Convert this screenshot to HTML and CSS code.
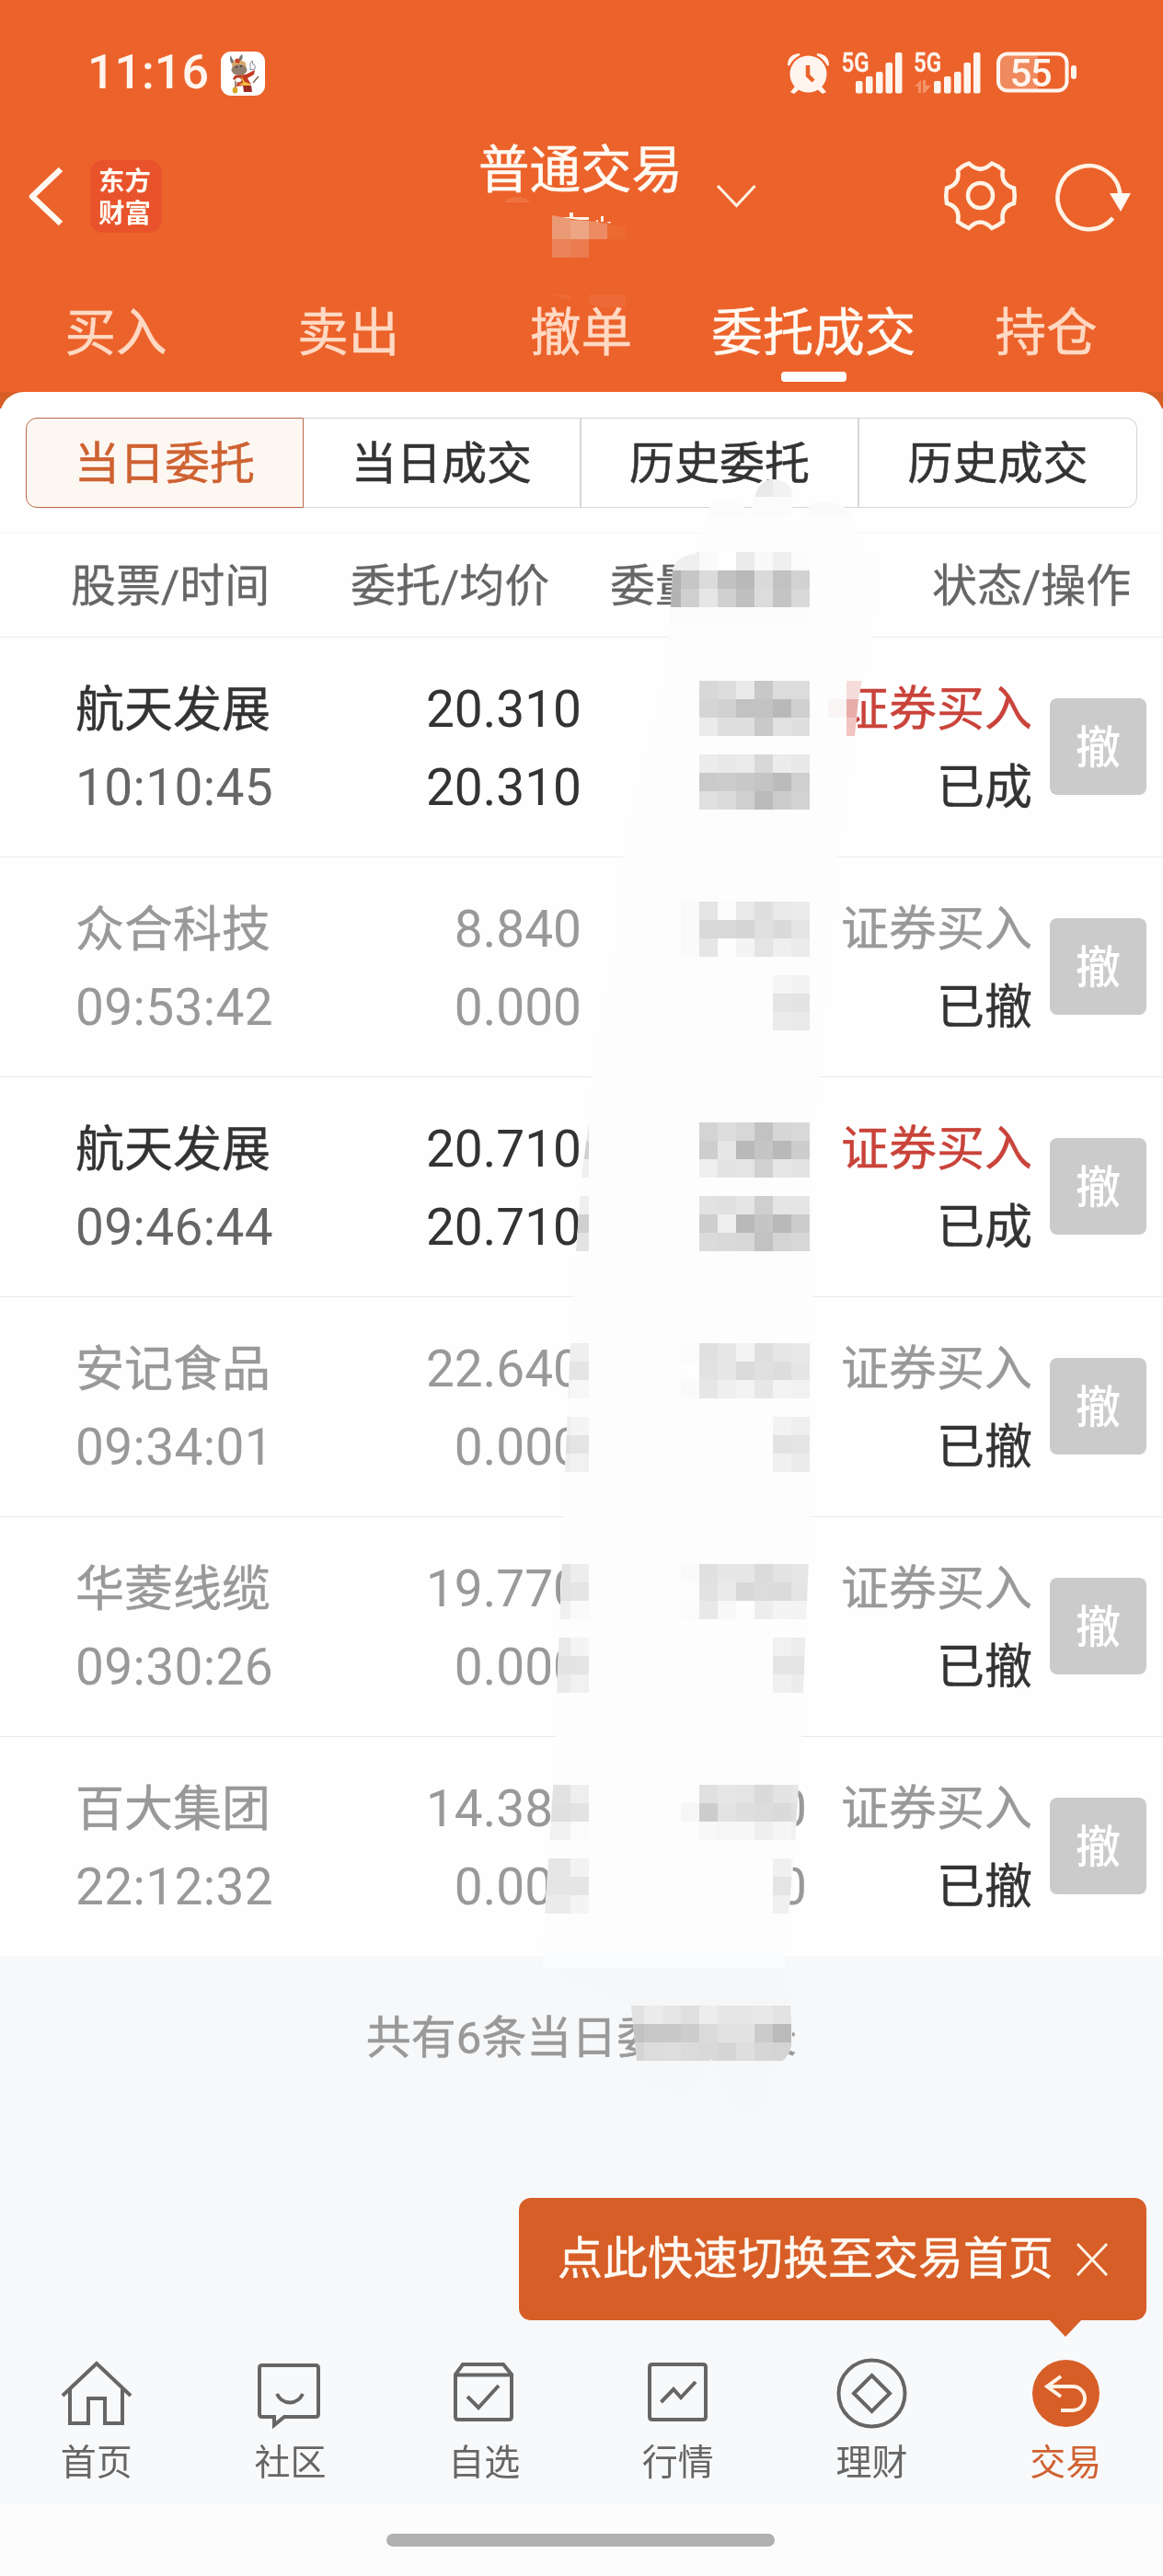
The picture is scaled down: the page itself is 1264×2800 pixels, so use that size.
FILE: index.html
```html
<!DOCTYPE html>
<html lang="zh-CN">
<head>
<meta charset="utf-8">
<title>普通交易</title>
<link rel="stylesheet" href="styles.css">
</head>
<body>
<div class="app">
  <header class="header">
    <div class="status">
      <div class="status-left">
        <span class="clock">11:16</span>
        <svg class="mascot" width="48" height="48" viewBox="0 0 48 48">
          <rect width="48" height="48" rx="11" fill="#fff"/>
          <path d="M13 15Q8 9 11 4Q12 10 18 13M21 11Q25 8 23 3Q20 5 19 10" fill="#777"/>
          <path d="M12 13Q18 6 27 12L28 20L13 22Z" fill="#dca86c"/>
          <path d="M15 9Q18 6 21 9L20 13L16 12Z" fill="#c8462a"/>
          <ellipse cx="20" cy="20" rx="8.500" ry="6" fill="#94806e"/>
          <circle cx="17" cy="17" r="1" fill="#333"/><circle cx="22" cy="16" r="1" fill="#333"/>
          <path d="M15 26L27 25L37 20L36 25L29 29L33 36L17 38L18 32L13 30Z" fill="#c33a22"/>
          <path d="M22 26L26 33L32 35L31 38L19 36L24 34Z" fill="#f0b93c"/>
          <path d="M24 37H33L34 44H25Z" fill="#9c2b20"/>
          <path d="M32 20L32 13L34 10L35 14Q38 14 37 19Z" fill="#fff" stroke="#889" stroke-width="1"/>
          <path d="M16 31V40M35 34L41 27" stroke="#865" stroke-width="1.5"/>
          <ellipse cx="19" cy="31" rx="3.500" ry="2.500" fill="#fff" stroke="#a98" stroke-width=".6"/>
          <ellipse cx="15.500" cy="42" rx="2.800" ry="3.500" fill="#d9a628"/>
        </svg>
      </div>
      <svg class="status-icons" width="316" height="63" viewBox="855 40 316 63">
        <g fill="#fff5ee">
          <ellipse cx="878.500" cy="80.500" rx="20" ry="20"/>
          <path d="M864 94L859 100L863 102L870 96ZM893 94L898 100L894 102L887 96Z"/>
          <path d="M857 71Q857 60 869 59Q861 63 857 71ZM900 71Q900 60 888 59Q896 63 900 71Z" stroke="#fff5ee" stroke-width="2"/>
          <g id="bars"><rect x="930" y="88" width="7.500" height="13.500" rx="2"/><rect x="941" y="83" width="7.500" height="18.500" rx="2"/><rect x="952" y="78" width="7.500" height="23.500" rx="2"/><rect x="962.500" y="68" width="7.500" height="33.500" rx="2"/><rect x="973" y="57" width="7.500" height="44.500" rx="2"/></g>
          <use href="#bars" x="85"/>
          <rect x="1164" y="71" width="6" height="15" rx="3"/>
        </g>
        <path d="M878 71V82L884 88" fill="none" stroke="#ec622b" stroke-width="4.500"/>
        <path d="M994 94L1001 87V101H998V94ZM1003 87H1006V93H1012L1005 101H1003Z" fill="#f4926a"/>
        <path d="M1095 58.500H1128V98.500H1095Q1085 98.500 1085 88V69Q1085 58.500 1095 58.500Z" fill="#ef8a5f"/>
        <rect x="1085" y="58.500" width="74.500" height="40" rx="10" fill="none" stroke="#fff5ee" stroke-width="4"/>
        <text class="net" x="914.500" y="78" textLength="30" lengthAdjust="spacingAndGlyphs">5G</text>
        <text class="net" x="993" y="78" textLength="30" lengthAdjust="spacingAndGlyphs">5G</text>
        <text class="battery" x="1097.500" y="94" textLength="46">55</text>
      </svg>
    </div>
    <div class="titlebar">
      <div class="brand">
        <svg width="40" height="70" viewBox="30 178 40 70"><path d="M66 184L35 213.500L66 243" class="line back"/></svg>
        <div class="logo">东方<br>财富</div>
      </div>
      <div class="title">普通交易</div>
      <svg class="caret" width="50" height="30" viewBox="775 198 50 30"><path d="M780 202L800.500 223.500L820.500 202" class="line thin"/></svg>
      <svg class="tools" width="210" height="84" viewBox="1022 171 210 84">
        <g class="line tool">
          <path d="M1053 177.500Q1065.500 190 1078 177.500Q1085 180 1090 185Q1087 200 1102 204.500Q1103.500 213 1102 221Q1087 225 1090 241Q1085 245 1078 248Q1065.500 235 1053 248Q1046 245 1041 241Q1044 225 1029 221Q1027.500 213 1029 204.500Q1044 200 1041 185Q1046 180 1053 177.500Z"/>
          <circle cx="1065.500" cy="212.500" r="13.500"/>
          <path d="M1209.500 237A34 34.500 0 1 1 1217.500 213"/>
        </g>
        <path d="M1206 210H1229L1218 230Z" fill="#fff9f2"/>
      </svg>
    </div>
    <nav class="tabs">
      <a>买入</a><a>卖出</a><a>撤单</a><a class="on">委托成交</a><a>持仓</a>
    </nav>
  </header>

  <main class="panel">
    <div class="segments">
      <span class="seg on">当日委托</span><span class="seg">当日成交</span><span class="seg">历史委托</span><span class="seg">历史成交</span>
    </div>
    <div class="row thead"><span>股票/时间</span><span>委托/均价</span><span>委量</span><span>状态/操作</span></div>
    <div class="row order done">
      <div class="name"><b>航天发展</b><i>10:10:45</i></div><div class="num"><b>20.310</b><i>20.310</i></div><div class="num"></div>
      <div class="state"><b>证券买入</b><i>已成</i></div><button>撤</button>
    </div>
    <div class="row order">
      <div class="name"><b>众合科技</b><i>09:53:42</i></div><div class="num"><b>8.840</b><i>0.000</i></div><div class="num"></div>
      <div class="state"><b>证券买入</b><i>已撤</i></div><button>撤</button>
    </div>
    <div class="row order done">
      <div class="name"><b>航天发展</b><i>09:46:44</i></div><div class="num"><b>20.710</b><i>20.710</i></div><div class="num"></div>
      <div class="state"><b>证券买入</b><i>已成</i></div><button>撤</button>
    </div>
    <div class="row order">
      <div class="name"><b>安记食品</b><i>09:34:01</i></div><div class="num"><b>22.640</b><i>0.000</i></div><div class="num"></div>
      <div class="state"><b>证券买入</b><i>已撤</i></div><button>撤</button>
    </div>
    <div class="row order">
      <div class="name"><b>华菱线缆</b><i>09:30:26</i></div><div class="num"><b>19.770</b><i>0.000</i></div><div class="num"><b>0</b><i>0</i></div>
      <div class="state"><b>证券买入</b><i>已撤</i></div><button>撤</button>
    </div>
    <div class="row order">
      <div class="name"><b>百大集团</b><i>22:12:32</i></div><div class="num"><b>14.380</b><i>0.000</i></div><div class="num"><b>0</b><i>0</i></div>
      <div class="state"><b>证券买入</b><i>已撤</i></div><button>撤</button>
    </div>
  </main>

  <section class="summary">
    <p>共有6条当日委托记录</p>
    <div class="tip"><span>点此快速切换至交易首页</span>
      <svg width="38" height="40" viewBox="0 0 38 40"><path d="M3 3L35 37M35 3L3 37" class="line thin"/></svg>
    </div>
  </section>

  <nav class="bottom">
    <a><svg width="80" height="80" viewBox="65 2561 80 80"><path class="line" d="M68 2604L105 2569L142 2604M76 2597V2634H96V2607H114V2634H133V2597"/></svg>首页</a>
    <a><svg width="80" height="80" viewBox="275 2561 80 80"><path class="line" d="M285 2571H343Q346 2571 346 2574V2624Q346 2627 343 2627H309L298 2636V2627H285Q282 2627 282 2624V2574Q282 2571 285 2571ZM301 2602Q305 2611 315 2611.500Q325 2611 329 2602"/></svg>社区</a>
    <a><svg width="80" height="80" viewBox="486 2561 80 80"><path class="line" d="M503 2570H547L556 2581V2627Q556 2630 553 2630H498Q495 2630 495 2627V2581ZM495 2581.500H556M508 2605L520 2617L542 2593"/></svg>自选</a>
    <a><svg width="80" height="80" viewBox="697 2561 80 80"><path class="line" d="M709 2570H764Q767 2570 767 2573V2627Q767 2630 764 2630H709Q706 2630 706 2627V2573Q706 2570 709 2570ZM718.500 2611L732 2597L740 2606L756 2589"/></svg>行情</a>
    <a><svg width="80" height="80" viewBox="907 2561 80 80"><g class="line"><circle cx="947.500" cy="2601.500" r="36"/><path d="M947.500 2582L967 2601.500L947.500 2621L928 2601.500Z"/></g></svg>理财</a>
    <a class="on"><svg width="80" height="80" viewBox="1118 2561 80 80"><circle cx="1158.500" cy="2601.500" r="36.500" fill="#d75e27"/><path class="line" d="M1153 2583L1138 2594L1153 2605M1138 2594H1166A13 13 0 0 1 1166 2620H1153"/></svg>交易</a>
  </nav>
  <div class="gesture"><span></span></div>

  <svg class="redaction" width="1264" height="2800" viewBox="0 0 1264 2800">
    <defs>
      <clipPath id="brush"><path d="M731 620Q735 603 757 602L763 580L770 555Q774 543 791 543Q808 544 812 560L818 550Q822 521 840 521Q861 522 862 540L858 570L874 560Q880 545 896 545Q920 549 929 562L931 596Q952 602 955 615L946 692L933 760L929 800L910 931L890 1170L883 1240L883 1410L881 1650L876 1762L871 1890L864 2003L857 2083L853 2126V2140L859 2180L861 2210Q862 2240 840 2245Q838 2290 815 2297Q785 2290 773 2237Q760 2275 738 2276Q697 2270 692 2240L686 2180L590 2140V2110L596 2023L601 1943L604 1890L605 1842L611 1700L614 1600L620 1460L626 1360L632 1280L640 1220L643 1170L668 1040L677 931L703 820L725 730Z"/></clipPath>
    </defs>
    <g clip-path="url(#brush)">
      <rect x="580" y="510" width="400" height="1610" fill="#fdfdfd"/>
      <rect x="580" y="2120" width="400" height="20" fill="#fafbfd"/>
      <rect x="580" y="2140" width="400" height="160" fill="#f6f7f9"/>
      <g id="cells"></g>
    </g>
    <g fill="#fff3e6"><path d="M608 236H619V231H623V236H640V239H630Z"/><path d="M653 235H656V241H653ZM647 240L650 239V242ZM659 241H664L663 243Z"/></g>
    <path d="M547 220Q562 208 577 220Z" fill="#ee7341"/>
    <path d="M600 234L620 238V260H600Z" fill="#eb9a76"/><path d="M620 239L640 240V260H620Z" fill="#eda584"/><path d="M640 240L660 243V260H640Z" fill="#ec8b63"/><path d="M660 244L680 246V260H660Z" fill="#ed6932"/>
    <path d="M600 260H620V280H600Z" fill="#ec8258"/><path d="M620 260H640V280H620Z" fill="#eb7c50"/>
    <g fill="#ed6a36"><path d="M598 320H620V326Z"/><path class="under" d="M640 320H680V334L654 334L640 331Z"/></g>
  </svg>
</div>
<script src="mosaic.js"></script>
</body>
</html>
```
FILE: styles.css
```css
* { box-sizing: border-box; }
body { margin: 0; background: #f7f8fa; }
.app { position: relative; width: 1264px; height: 2800px; overflow: hidden; display: flex; flex-direction: column; font-family: Roboto, "Noto Sans CJK SC", sans-serif; color: #333; white-space: nowrap; }
svg { display: block; flex: none; }
.line { fill: none; stroke: #666; stroke-width: 4; }
.line.back { stroke: #fff9f2; stroke-width: 6.5; stroke-linejoin: round; }
.line.thin { stroke: #fff3e6; stroke-width: 3; }
.line.tool { stroke: #fff3e6; stroke-width: 4.5; }
b, i { font-weight: 400; font-style: normal; }

.header { height: 444px; margin-bottom: -18px; background: linear-gradient(#ec622b 426px, #d75e27 426px); color: #fff9f2; }
.status { height: 134px; padding: 40px 93px 0 95px; display: flex; justify-content: space-between; }
.status-left { display: flex; gap: 13px; padding-top: 16px; }
.clock { width: 132px; font-size: 52px; font-weight: 500; line-height: 46px; color: #fff5ee; }
.net { font: 500 29px Roboto, sans-serif; fill: #fff5ee; stroke: #fff5ee; stroke-width: 0.5px; }
.battery { font: 500 42px Roboto, sans-serif; fill: #fff5ee; }
.titlebar { height: 166px; padding: 0 32px 0 30px; display: grid; grid-template-columns: 490px 222px 33px 50px 1fr; align-items: start; }
.brand { display: flex; gap: 28px; padding-top: 40px; }
.brand svg { margin-top: 4px; }
.logo { width: 78px; height: 79px; border-radius: 14px; background: #e9532c; padding: 3px 3px 0 0; text-align: center; font: 700 28.5px/35px "Noto Sans CJK SC", sans-serif; }
.title { font-size: 55.5px; line-height: 80px; padding-top: 12px; -webkit-text-stroke: 0.6px; }
.caret { grid-column: 4; margin-top: 64px; }
.tools { grid-column: 5; justify-self: end; margin-top: 37px; }
.tabs { height: 126px; display: grid; grid-template-columns: repeat(5, 1fr); font-size: 55.5px; line-height: 120px; padding-top: 3px; text-align: center; color: #ffd9c3; -webkit-text-stroke: 0.5px; }
.tabs a { margin-left: -1px; }
.tabs .on { color: #fff9f2; }
.tabs .on::after { content: ""; display: block; width: 71px; height: 11px; margin: -19px auto 0; border-radius: 4px; background: #fff; }

.panel { height: 1700px; background: #fefefe; border-radius: 26px 26px 0 0; padding-top: 28px; }
.segments { height: 98px; margin: 0 28px 27px; display: grid; grid-template-columns: 302px 302px 302px 1fr; grid-template-rows: 98px; font-size: 49px; line-height: 96px; text-align: center; -webkit-text-stroke: 0.5px; }
.seg { padding-top: 2px; border: 1px solid #d6d6d6; border-left-width: 0; border-right-width: 2px; }
.seg.on { border: 1px solid #b9694a; border-radius: 12px 0 0 12px; background: #fdf7f2; color: #ce6231; }
.seg:last-child { border-radius: 0 12px 12px 0; border-right-width: 1px; }
.thead { height: 114px; border-top: 1px solid #f6f6f6; display: grid; grid-template-columns: 304px 282px 350px 1fr; padding: 2px 0 0 77px; font-size: 49px; line-height: 112px; color: #666; -webkit-text-stroke: 0.3px; }
.row { border-bottom: 1px solid #ebebeb; }
.order { height: 239px; display: grid; grid-template-columns: 300px 250px 245px 244px 105px; padding: 34px 0 0 82px; color: #999; }
.order:last-child { border-bottom: 0; }
.order b, .order i { display: block; height: 85px; line-height: 90px; font-size: 53px; }
.order .name i, .order .num b, .order .num i { font-size: 55px; line-height: 88px; }
.order .name i { letter-spacing: 0.35px; }
.name b, .state { -webkit-text-stroke: 0.4px; }
.num { text-align: right; }
.state { text-align: right; margin-right: -1px; }
.order .state b, .order .state i { font-size: 52px; }
.order .state i { color: #333; }
.done { color: #333; }
.done .name i { color: #666; }
.done .state b { color: #c9433a; }
.order button { width: 105px; height: 105px; margin: 32px 0 0 20px; padding: 0 0 5px; border: 0; border-radius: 8px; background: #cbcbcb; color: #fff; font: 500 49px/100px "Noto Sans CJK SC", sans-serif; }

.summary { height: 414px; display: flex; flex-direction: column; }
.summary p { margin: 55px 0 0; height: 67px; line-height: 70px; text-align: center; font-size: 49px; color: #999; -webkit-text-stroke: 0.5px; }
.tip { position: relative; align-self: flex-end; width: 682px; height: 133px; margin: 141px 18px 0 0; padding: 0 40px 0 42px; display: flex; align-items: center; justify-content: space-between; border-radius: 13px; background: #d75e27; color: #fff9f2; font-size: 49px; }
.tip span { margin-bottom: 10px; -webkit-text-stroke: 0.4px; }
.tip::after { content: ""; position: absolute; right: 70px; top: 132px; border: solid transparent; border-width: 19px 18px 0; border-top-color: #d75e27; }
.bottom { height: 182px; padding-top: 21px; display: grid; grid-template-columns: repeat(6, 1fr); background: #f8f9fb; font-size: 39px; line-height: 72px; color: #666; }
.bottom a { display: flex; flex-direction: column; align-items: center; margin-left: -1px; }
.bottom .on { color: #cf6231; }
.bottom .on .line { stroke: #fff3e6; }
.gesture { height: 78px; padding-top: 32px; background: #fcfcfc; }
.gesture span { display: block; width: 422px; height: 14px; margin: 0 auto 0 420px; border-radius: 7px; background: #b0b0b0; }
.redaction { position: absolute; left: 0; top: 0; pointer-events: none; }
.redaction .under { mix-blend-mode: lighten; }
```
FILE: mosaic.js
```js
// Each entry: x, y of the first 20px cell, then one grey level (hex) per cell.
const runs = [
  [820, 520, "e9 f2 f6"], [760, 540, "fb fb fb fb fb fb fa fa fb"],
  [720, 600, "ef ef fa fe eb f9 ef fb"], [720, 620, "b3 c6 db c1 b9 da c2 d2"],
  [720, 640, "b3 cf e6 d0 c0 dc c4 d9"], [720, 660, "fb fb fb fb fb fb fb fb"],
  [760, 740, "d8 dc ea c8 dc dc"], [760, 760, "d5 d1 c2 c3 b9 cf"], [760, 780, "eb df df c9 e1 df"],
  [760, 820, "ec e8 eb d8 ec e8"], [760, 840, "ca cc c8 c4 bb cf"], [760, 860, "e0 db cf bb cc d3"],
  [740, 980, "fa e4 fb e9 df e9 eb"], [740, 1000, "fa d9 d9 d5 e0 da e4"], [740, 1020, "fa e6 fd f4 e4 ef eb"],
  [840, 1060, "f5 f2"], [840, 1080, "e5 e3"], [840, 1100, "eb e9"],
  [620, 1220, "e8"], [620, 1240, "d0"], [620, 1260, "ef"],
  [760, 1220, "d4 dd d7 c2 d6 d9"], [760, 1240, "ce e6 b9 c5 b9 cd"], [760, 1260, "ee e3 e4 d1 e6 e3"],
  [620, 1300, "ef"], [620, 1320, "d0"], [620, 1340, "e3"],
  [760, 1300, "e2 e0 e5 cf e5 e5"], [760, 1320, "ce ee b9 c5 b9 cd"], [760, 1340, "db d9 d8 c2 d4 d7"],
  [600, 1460, "ef ef"], [600, 1480, "e5 e5"], [600, 1500, "f0 f7"],
  [740, 1460, "fb e0 e7 f3 de e6 e8"], [740, 1480, "fe e2 e7 db e0 dd e5"], [740, 1500, "fa e6 ef f3 e7 f3 f1"],
  [600, 1540, "ee f4"], [600, 1560, "e0 e4"], [600, 1580, "ee f1"],
  [840, 1540, "f2 ee"], [840, 1560, "e3 e5"], [840, 1580, "f0 ec"],
  [600, 1700, "e3 ed"], [600, 1720, "e3 e5"], [600, 1740, "f0 fa"],
  [740, 1700, "fa e0 e7 e6 db e3 e6"], [760, 1720, "e2 ea d8 dc db e4"], [740, 1740, "fb e8 f8 fd ed f4 f3"],
  [600, 1780, "e9 f4"], [600, 1800, "e3 e4"], [600, 1820, "ea f1"],
  [840, 1780, "f1 ed"], [840, 1800, "e5 e4"], [840, 1820, "f0 ec"],
  [580, 1940, "e2 e2 ee"], [580, 1960, "e0 e0 e3"], [580, 1980, "f1 f1 fb"],
  [760, 1940, "e0 e6 e4 da e3 e6"], [740, 1960, "f6 cd e3 de dc da e0"], [760, 1980, "f8 f6 f7 ef f5 f1"],
  [580, 2020, "e6 e6 f2"], [580, 2040, "e5 e5 e5"], [580, 2060, "eb eb f4"],
  [840, 2020, "f0 f8"], [840, 2040, "e5 ed"], [840, 2060, "f0 f8"],
  [680, 2180, "e1 ec e6 e0 ed e7 e7 e8 e3"], [680, 2200, "c2 c8 c8 cd db e1 e2 cb ba"], [680, 2220, "d4 dc de db d9 d5 de d6 d4"]
];
const tinted = [[920, 740, "#f5dcdb"], [900, 760, "#faf5f5"], [920, 760, "#e8ada9"], [920, 780, "#f1c3c1"]];

const layer = document.getElementById("cells");
function cell(x, y, fill) {
  const r = document.createElementNS("http://www.w3.org/2000/svg", "rect");
  r.setAttribute("x", x);
  r.setAttribute("y", y);
  r.setAttribute("width", 20);
  r.setAttribute("height", 20);
  r.setAttribute("fill", fill);
  layer.appendChild(r);
}
for (const [x, y, levels] of runs) {
  levels.split(" ").forEach((v, i) => cell(x + i * 20, y, "#" + v + v + v));
}
tinted.forEach(([x, y, fill]) => cell(x, y, fill));
```
